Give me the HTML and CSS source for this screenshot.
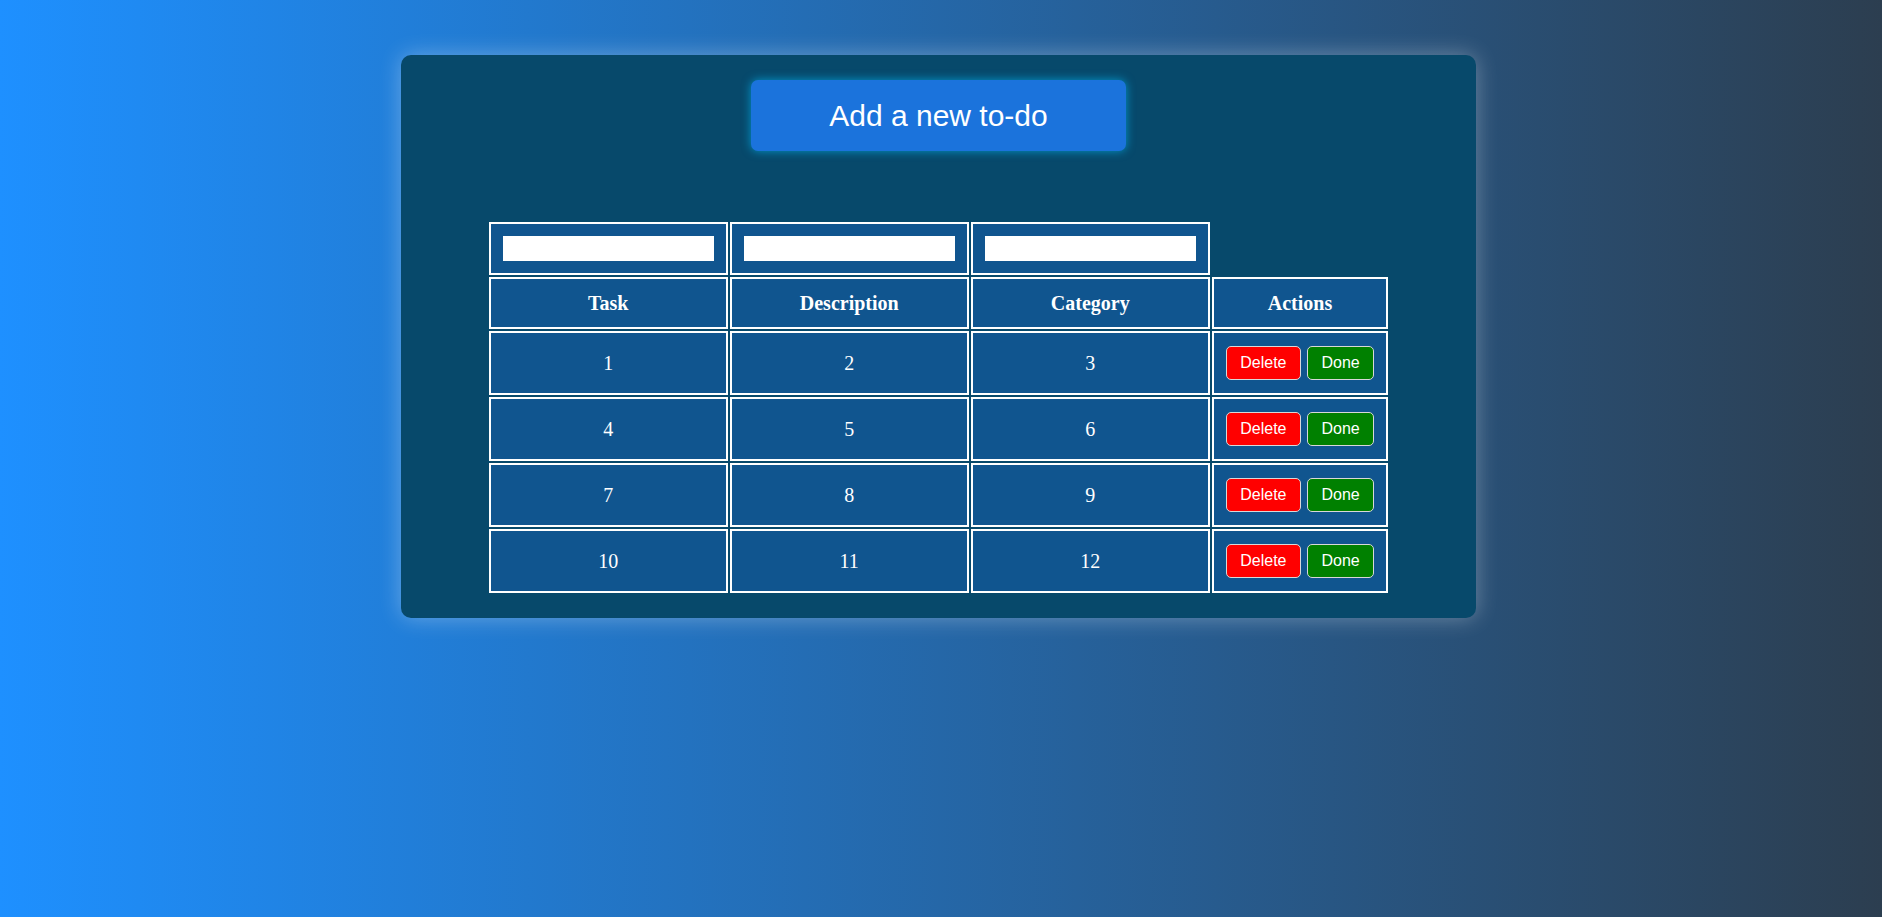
FILE: index.html
```html
<!DOCTYPE html>
<html lang="en">
<head>
<meta charset="utf-8">
<title>To-do</title>
<link rel="stylesheet" href="styles.css">
</head>
<body>
<main class="card">
  <button class="add-btn" type="button">Add a new to-do</button>
  <table class="todo-table">
    <tr class="filter-row">
      <td class="col"><input class="filter" type="text"></td>
      <td class="col"><input class="filter" type="text"></td>
      <td class="col"><input class="filter" type="text"></td>
    </tr>
    <tr>
      <th class="col">Task</th>
      <th class="col">Description</th>
      <th class="col">Category</th>
      <th class="actions-col">Actions</th>
    </tr>
    <tr>
      <td>1</td><td>2</td><td>3</td>
      <td><div class="actions"><button class="btn delete" type="button">Delete</button><button class="btn done" type="button">Done</button></div></td>
    </tr>
    <tr>
      <td>4</td><td>5</td><td>6</td>
      <td><div class="actions"><button class="btn delete" type="button">Delete</button><button class="btn done" type="button">Done</button></div></td>
    </tr>
    <tr>
      <td>7</td><td>8</td><td>9</td>
      <td><div class="actions"><button class="btn delete" type="button">Delete</button><button class="btn done" type="button">Done</button></div></td>
    </tr>
    <tr>
      <td>10</td><td>11</td><td>12</td>
      <td><div class="actions"><button class="btn delete" type="button">Delete</button><button class="btn done" type="button">Done</button></div></td>
    </tr>
  </table>
</main>
</body>
</html>
```
FILE: styles.css
```css
html, body {
  margin: 0;
  padding: 0;
}
body {
  min-height: 100vh;
  background: linear-gradient(to right, #1e90ff, #2c3e50);
  font-family: "Liberation Serif", "Times New Roman", serif;
  padding: 55px 5px 0 0;
  box-sizing: border-box;
}
.card {
  width: 1075px;
  margin: 0 auto;
  box-sizing: border-box;
  padding: 25px 0 23px;
  background: #07496b;
  border-radius: 10px;
  box-shadow: 0 0 22px rgba(255, 255, 255, 0.32);
  display: flex;
  flex-direction: column;
  align-items: center;
}
.add-btn {
  width: 375px;
  height: 71px;
  border: none;
  border-radius: 7px;
  background: #1b73dc;
  color: #ffffff;
  font-family: "Liberation Sans", Arial, sans-serif;
  font-size: 30px;
  box-shadow: 0 0 10px rgba(0, 190, 255, 0.65);
  margin-bottom: 69px;
  padding: 0;
}
.todo-table {
  border-collapse: separate;
  border-spacing: 2px;
  color: #ffffff;
}
.todo-table td, .todo-table th {
  border: 2px solid #ffffff;
  background: #10558f;
  text-align: center;
  vertical-align: middle;
  padding: 13px 12px;
  font-size: 20px;
  line-height: 22px;
  box-sizing: border-box;
}
.todo-table th {
  font-weight: bold;
}
.todo-table .col {
  width: 239px;
}
.todo-table .actions-col {
  width: 176px;
}
.filter-row td {
  padding: 12px;
}
.filter {
  display: block;
  width: 100%;
  height: 25px;
  box-sizing: border-box;
  border: none;
  background: #ffffff;
  margin: 0;
  padding: 0 4px;
}
.actions {
  display: flex;
  justify-content: center;
  gap: 6px;
}
.btn {
  height: 34px;
  padding: 0 13.5px;
  border: 1px solid #d8d8d8;
  border-radius: 5px;
  color: #ffffff;
  font-family: "Liberation Sans", Arial, sans-serif;
  font-size: 16px;
  line-height: 18px;
}
.delete {
  background: #ff0000;
}
.done {
  background: #008000;
}
```
